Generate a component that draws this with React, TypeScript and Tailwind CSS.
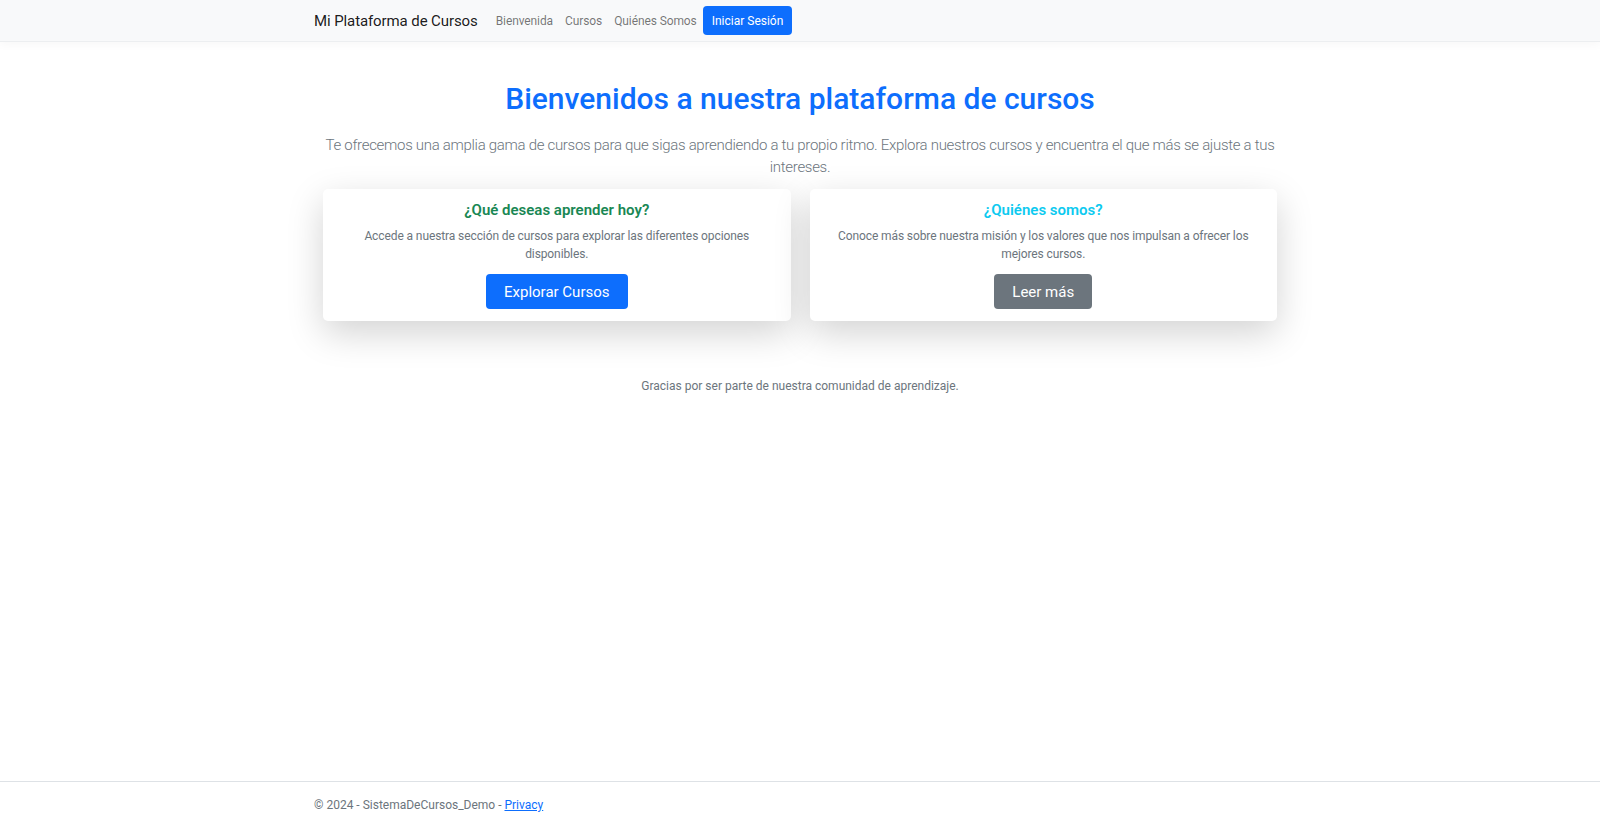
import React from "react";

export default function App() {
  const font = { fontFamily: '"Segoe UI", Roboto, "Open Sans", sans-serif' };
  return (
    <div className="min-h-[826px] flex flex-col bg-white text-[12px] leading-[18px] text-[#212529]" style={font}>
      <nav className="h-[42px] bg-[#f8f9fa] border-b border-[#eceef0] shadow-[0_3px_9px_rgba(0,0,0,0.03)] shrink-0">
        <div className="w-[990px] mx-auto px-[9px] h-full flex items-center">
          <a className="text-[15px] leading-[22px] text-[rgba(0,0,0,0.9)] mr-[12px] tracking-[-0.1px]">Mi Plataforma de Cursos</a>
          <a className="px-[6px] text-[12px] text-[rgba(0,0,0,0.55)] tracking-[-0.1px]">Bienvenida</a>
          <a className="px-[6px] text-[12px] text-[rgba(0,0,0,0.55)] tracking-[-0.1px]">Cursos</a>
          <a className="px-[6px] text-[12px] text-[rgba(0,0,0,0.55)] tracking-[-0.1px]">Quiénes Somos</a>
          <button className="ml-[0px] h-[29px] px-[9px] rounded-[4px] bg-[#0d6efd] text-white text-[12px]">Iniciar Sesión</button>
        </div>
      </nav>

      <main className="w-[990px] mx-auto px-[9px]">
        <div className="text-center pt-[39px]">
          <h1 className="text-[30px] leading-[36px] font-medium text-[#0d6efd] mb-[17px]">
            Bienvenidos a nuestra plataforma de cursos
          </h1>
          <p className="text-[15px] leading-[22px] font-light text-[#6c757d] mb-[11px] tracking-[-0.3px]">
            Te ofrecemos una amplia gama de cursos para que sigas aprendiendo a tu propio ritmo. Explora nuestros cursos y encuentra el que más se ajuste a tus intereses.
          </p>
          <div className="px-[9px] grid grid-cols-2 gap-[19px]">
            <div className="bg-white rounded-[5px] shadow-[0_12px_36px_rgba(0,0,0,0.175)] h-[132px] flex flex-col items-center pt-[12px]">
              <h5 className="text-[15px] leading-[18px] font-semibold text-[#198754] mb-[8px]">¿Qué deseas aprender hoy?</h5>
              <p className="text-[12px] leading-[18px] text-[#6c757d] px-[24px] mb-[11px] tracking-[-0.1px]">
                Accede a nuestra sección de cursos para explorar las diferentes opciones disponibles.
              </p>
              <button className="h-[35px] px-[18px] rounded-[4px] bg-[#0d6efd] text-white text-[15px]">Explorar Cursos</button>
            </div>
            <div className="bg-white rounded-[5px] shadow-[0_12px_36px_rgba(0,0,0,0.175)] h-[132px] flex flex-col items-center pt-[12px]">
              <h5 className="text-[15px] leading-[18px] font-semibold text-[#0dcaf0] mb-[8px]">¿Quiénes somos?</h5>
              <p className="text-[12px] leading-[18px] text-[#6c757d] px-[24px] mb-[11px] tracking-[-0.1px]">
                Conoce más sobre nuestra misión y los valores que nos impulsan a ofrecer los mejores cursos.
              </p>
              <button className="h-[35px] px-[18px] rounded-[4px] bg-[#6c757d] text-white text-[15px]">Leer más</button>
            </div>
          </div>
          <p className="mt-[56px] text-[12px] leading-[18px] text-[#6c757d]">
            Gracias por ser parte de nuestra comunidad de aprendizaje.
          </p>
        </div>
      </main>

      <footer className="mt-auto border-t border-[#dee2e6] h-[45px] shrink-0">
        <div className="w-[990px] mx-auto px-[9px] leading-[46px] text-[12px] text-[#6c757d] whitespace-nowrap">
          © 2024 - SistemaDeCursos_Demo - <a className="text-[#0d6efd] underline">Privacy</a>
        </div>
      </footer>
    </div>
  );
}
